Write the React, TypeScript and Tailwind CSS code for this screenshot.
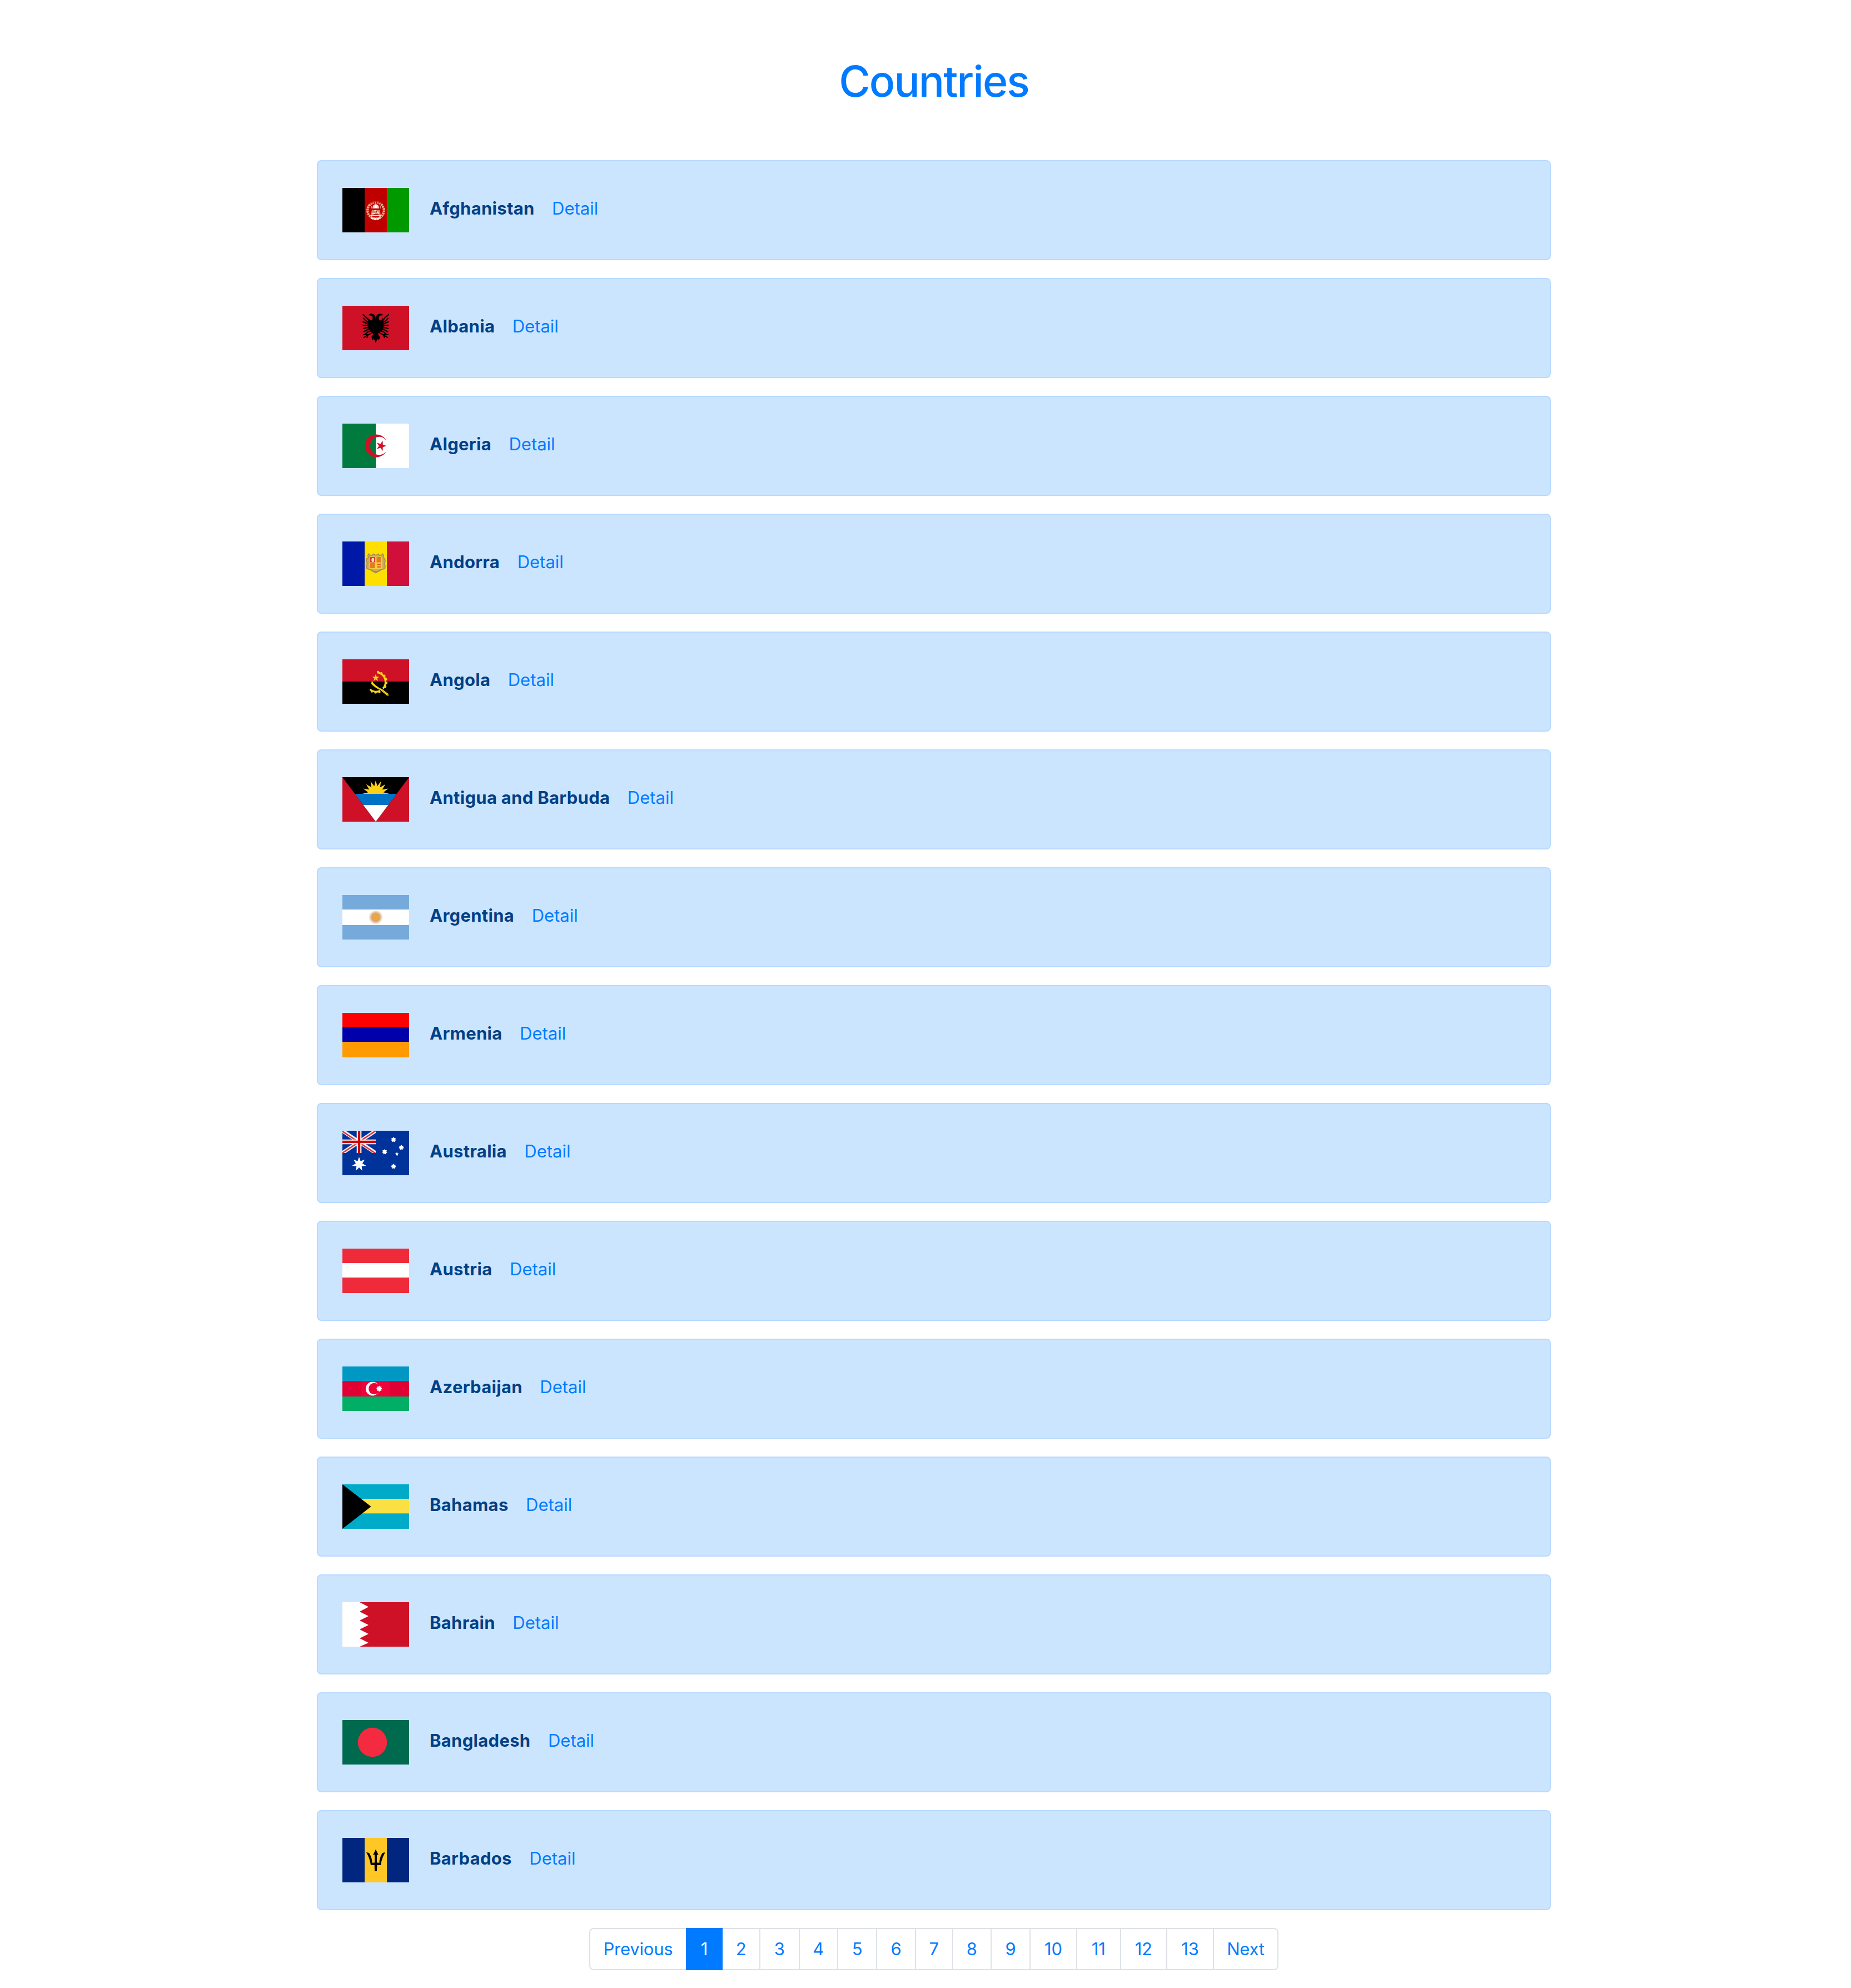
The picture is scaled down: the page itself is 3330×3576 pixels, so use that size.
import React from "react";

type Point = [number, number];

function starPoints(cx: number, cy: number, outer: number, inner: number, count: number, rotation = -90): string {
  const pts: Point[] = [];
  for (let i = 0; i < count * 2; i++) {
    const r = i % 2 === 0 ? outer : inner;
    const a = ((rotation + (i * 180) / count) * Math.PI) / 180;
    pts.push([cx + r * Math.cos(a), cy + r * Math.sin(a)]);
  }
  return pts.map(([x, y]) => `${x.toFixed(2)},${y.toFixed(2)}`).join(" ");
}

function Vertical({ colors }: { colors: [string, string, string] }) {
  return (
    <>
      {colors.map((c, i) => (
        <rect key={i} x={i * 40} width="40" height="80" fill={c} />
      ))}
    </>
  );
}

function Horizontal({ colors, a = 26, b = 54 }: { colors: [string, string, string]; a?: number; b?: number }) {
  return (
    <>
      <rect width="120" height={a} fill={colors[0]} />
      <rect y={a} width="120" height={b - a} fill={colors[1]} />
      <rect y={b} width="120" height={80 - b} fill={colors[2]} />
    </>
  );
}

const afghanistan = (
  <>
    <Vertical colors={["#000000", "#bf0000", "#009900"]} />
    <circle cx="60" cy="40.5" r="14.8" fill="none" stroke="#e3ae8c" strokeWidth="4.2" strokeDasharray="3.2 1" />
    <path d="M49 27q11-7 22 0" fill="none" stroke="#bf0000" strokeWidth="5" opacity=".6" />
    <path d="M54 37q0-7 6-8q6 1 6 8z" fill="#f3cfc4" />
    <circle cx="60" cy="33.5" r="2.6" fill="#fff" />
    <path d="M52 32v5M68 32v5M60 27v4" stroke="#e9b6a6" strokeWidth="1.4" />
    <path d="M53 40h14l2 9H51z" fill="#d98873" />
    <path d="M58 40l8 6M54 46h5M51 50h18" stroke="#f7ddd2" strokeWidth="2" />
    <path d="M61 41v3M56 48h9" stroke="#a31010" strokeWidth="1.6" />
    <path d="M52 54q8 4.500 16 0" fill="none" stroke="#fff" strokeWidth="3" strokeDasharray="4 1" />
  </>
);

const eagleHalf = (
  <g>
    <path
      d="M60.200 27L59.500 20Q58 14.500 52 14.300Q48.500 14 46.500 17L51 17.500Q54.500 18 54.500 22Q54.500 26 51.500 26.500Q48 25 47 21L46.500 40Q47 45 53.500 47.500L56 51L53 55L55.500 59L58 62L60.200 67z"
      fill="#000"
    />
    <path
      d="M48 28L44 22L36.500 15.500M48 31L42 27L37.500 22M48 34L42 31L36.500 28.500M48 37L42 35L36.500 35M48 40L43 39.500L37 41M49 43L44 43.500L38 47M51 45.500L46 47L40 52"
      fill="none"
      stroke="#000"
      strokeWidth="2.200"
    />
    <path d="M56 47L49 51L44 53.500M47 52L37 52M45 53L38 57.500M46 53L44 58M58 58L53.500 57L55 61" fill="none" stroke="#000" strokeWidth="2" />
  </g>
);

const albania = (
  <>
    <rect width="120" height="80" fill="#ce1126" />
    {eagleHalf}
    <g transform="translate(120 0) scale(-1 1)">{eagleHalf}</g>
  </>
);

const algeria = (
  <>
    <rect width="120" height="80" fill="#fff" />
    <rect width="60" height="80" fill="#007b3d" />
    <path d="M79.500 31A20.500 20.500 0 1 0 79.500 49A16.300 16.300 0 1 1 79.500 31z" fill="#ce1126" />
    <polygon points={starPoints(69.6, 40, 9.6, 3.8, 5, 0)} fill="#ce1126" />
  </>
);

const andorra = (
  <>
    <Vertical colors={["#0018a8", "#fedf00", "#d0103a"]} />
    <g transform="translate(3 1.500) scale(.95)">
      <path
        d="M55 22l3 2h4l3-2 2 3 4-1 2-2 2 3-1 4 3 2 1 5-2 4 2 5-1 5-4 1-5 1-3 3-5 3-5-3-3-3-5-1-4-1-1-5 2-5-2-4 1-5 3-2-1-4 2-3 2 2 4 1z"
        fill="#cfad50"
        stroke="#ab8c56"
        strokeWidth="1.800"
      />
      <rect x="48" y="27" width="24" height="24" rx="2" fill="#f0cf50" />
      <rect x="49" y="28" width="10" height="10" fill="#d8323f" />
      <ellipse cx="54.500" cy="33.500" rx="2.600" ry="4" fill="#ffe3a0" />
      <rect x="61.500" y="28" width="8.500" height="10" fill="#ea7a14" />
      <rect x="49.500" y="39.500" width="9" height="9.500" fill="#ea7a14" />
      <rect x="61.500" y="39.500" width="8.500" height="9.500" fill="#fbcf12" />
      <path d="M62.500 42h7M62.500 46.500h7" stroke="#dd5a22" strokeWidth="2.200" />
      <path d="M51 53q9 5 18 0" fill="none" stroke="#ab8c46" strokeWidth="2" />
    </g>
  </>
);

const angola = (
  <>
    <rect width="120" height="80" fill="#000" />
    <rect width="120" height="40" fill="#ce1126" />
    <path
      d="M62.500 23.500A17 17 0 0 1 77.500 39A17 17 0 0 1 73 52.500M68 56.500A17 17 0 0 1 49.500 54"
      fill="none"
      stroke="#f9d616"
      strokeWidth="3.400"
    />
    <path
      d="M62.500 22A19 19 0 0 1 79.500 39A19 19 0 0 1 74 54M68 58.500A19 19 0 0 1 49 56"
      fill="none"
      stroke="#f9d616"
      strokeWidth="3"
      strokeDasharray="3.400 3.600"
    />
    <path d="M53 38.500L51.800 44Q58 51 68.500 55.500L80 65L83 65.500L82.500 62L72 54Q58 48 53 38.500z" fill="#f9d616" />
    <path d="M70 55l12 9" stroke="#c9a30a" strokeWidth="1" />
    <polygon points={starPoints(60, 33.4, 6.8, 2.7, 5)} fill="#f9d616" />
  </>
);

const antigua = (
  <>
    <rect width="120" height="80" fill="#ce1126" />
    <polygon points="0,0 120,0 60,80" fill="#000" />
    <polygon points={starPoints(60, 30, 24.5, 14, 16)} fill="#fcd116" />
    <polygon points="22.500,30 97.500,30 82.500,50 37.500,50" fill="#0072c6" />
    <polygon points="37.500,50 82.500,50 60,80" fill="#fff" />
  </>
);

const argentina = (
  <>
    <defs>
      <radialGradient id="may-sun">
        <stop offset="0" stopColor="#e8a030" />
        <stop offset=".36" stopColor="#f3ad3c" />
        <stop offset=".44" stopColor="#d59a55" />
        <stop offset=".7" stopColor="#e6c39b" />
        <stop offset="1" stopColor="#fff" />
      </radialGradient>
    </defs>
    <Horizontal colors={["#75aadb", "#ffffff", "#75aadb"]} />
    <circle cx="60" cy="40" r="13" fill="url(#may-sun)" />
  </>
);

const armenia = <Horizontal colors={["#ff0000", "#0000aa", "#ff9a00"]} b={52.3} />;

const australia = (
  <>
    <rect width="120" height="80" fill="#003399" />
    <svg width="60" height="40" viewBox="0 0 60 40">
      <path d="M0 0L60 40M60 0L0 40" stroke="#f0f0f4" strokeWidth="6.600" />
      <path d="M0 1L60 41M60 0L0 40" stroke="#d8353d" strokeWidth="2.600" />
      <path d="M30 0V40M0 20H60" stroke="#fff" strokeWidth="8.600" />
      <path d="M30 0V40M0 20H60" stroke="#d00000" strokeWidth="4.400" />
    </svg>
    <polygon points={starPoints(30, 60, 13, 6, 7)} fill="#fff" />
    <polygon points={starPoints(92, 16, 5, 3.2, 7)} fill="#fff" />
    <polygon points={starPoints(106, 30, 5, 3.2, 7)} fill="#fff" />
    <polygon points={starPoints(76, 38, 5, 3.2, 7)} fill="#fff" />
    <polygon points={starPoints(98, 42, 3.4, 2, 5)} fill="#fff" />
    <polygon points={starPoints(92, 64, 5, 3.2, 7)} fill="#fff" />
  </>
);

const austria = <Horizontal colors={["#ef2b3b", "#ffffff", "#ef2b3b"]} b={52} />;

const azerbaijan = (
  <>
    <Horizontal colors={["#0098c3", "#e00034", "#00ae65"]} />
    <rect x="34" y="26" width="52" height="28" fill="#ee0438" />
    <circle cx="54.300" cy="40" r="12.400" fill="#fff" />
    <circle cx="57.300" cy="40" r="10.200" fill="#ee0438" />
    <polygon points={starPoints(66.3, 40, 5.6, 3.8, 8)} fill="#fff" />
  </>
);

const bahamas = (
  <>
    <Horizontal colors={["#00abc9", "#fae042", "#00abc9"]} b={52.3} />
    <polygon points="0,0 51.500,40 0,80" fill="#000" />
  </>
);

const bahrain = (
  <>
    <rect width="120" height="80" fill="#ce1126" />
    <path d="M0 0H31L47 8.500L31 17L47 25L31 33L47 41L31 49L47 57L31 65L47 73L31 80H0z" fill="#fff" />
  </>
);

const bangladesh = (
  <>
    <rect width="120" height="80" fill="#006a4e" />
    <circle cx="54" cy="40" r="26.200" fill="#f42a41" />
  </>
);

const tridentHalf = (
  <path d="M60.100 20.500L55 31L58 30V44.500L53.500 44.800Q54 37 48 27L43 26Q49.500 37 51 49L57.700 49L58 60H60.100z" />
);

const barbados = (
  <>
    <Vertical colors={["#00267f", "#ffc726", "#00267f"]} />
    <g fill="#000">
      {tridentHalf}
      <g transform="translate(120 0) scale(-1 1)">{tridentHalf}</g>
    </g>
  </>
);

type Country = { name: string; flag: React.ReactNode };

const countries: Country[] = [
  { name: "Afghanistan", flag: afghanistan },
  { name: "Albania", flag: albania },
  { name: "Algeria", flag: algeria },
  { name: "Andorra", flag: andorra },
  { name: "Angola", flag: angola },
  { name: "Antigua and Barbuda", flag: antigua },
  { name: "Argentina", flag: argentina },
  { name: "Armenia", flag: armenia },
  { name: "Australia", flag: australia },
  { name: "Austria", flag: austria },
  { name: "Azerbaijan", flag: azerbaijan },
  { name: "Bahamas", flag: bahamas },
  { name: "Bahrain", flag: bahrain },
  { name: "Bangladesh", flag: bangladesh },
  { name: "Barbados", flag: barbados },
];

const pages: { label: string; width: string }[] = [
  { label: "Previous", width: "w-[176px]" },
  { label: "1", width: "w-[66px]" },
  { label: "2", width: "w-[70px]" },
  { label: "3", width: "w-[72.5px]" },
  { label: "4", width: "w-[71.5px]" },
  { label: "5", width: "w-[72px]" },
  { label: "6", width: "w-[72px]" },
  { label: "7", width: "w-[68.5px]" },
  { label: "8", width: "w-[71.5px]" },
  { label: "9", width: "w-[72px]" },
  { label: "10", width: "w-[86px]" },
  { label: "11", width: "w-[80.5px]" },
  { label: "12", width: "w-[85.5px]" },
  { label: "13", width: "w-[86px]" },
  { label: "Next", width: "w-[118px]" },
];

function CountryCard({ name, flag }: Country) {
  return (
    <li className="flex h-[180px] items-center rounded-lg border-2 border-[#b8daff] bg-[#cce5ff] px-10">
      <svg className="size-32 shrink-0 blur-[0.6px]" viewBox="-4 -24 128 128" aria-hidden="true">
        <svg width="120" height="80" viewBox="0 0 120 80">
          {flag}
        </svg>
      </svg>
      <div className="ml-[33px] flex items-baseline gap-[31.5px] pb-1.5 text-[31px] leading-[48px] whitespace-nowrap">
        <span className="font-bold tracking-[0.3px] text-[#004085]">{name}</span>
        <a href="#" className="text-[#007bff]">
          Detail
        </a>
      </div>
    </li>
  );
}

export default function App() {
  return (
    <main className="flex min-h-[3576px] flex-col items-center bg-white pl-[30px] font-['Inter',sans-serif]">
      <h1 className="mt-[98px] h-24 text-[77px] leading-[96px] font-medium tracking-[-1.9px] text-[#007bff]">Countries</h1>
      <ul className="mt-[94px] flex w-[2220px] flex-col gap-8">
        {countries.map((c) => (
          <CountryCard key={c.name} name={c.name} flag={c.flag} />
        ))}
      </ul>
      <nav className="mt-8 flex text-[31px] tracking-[-0.2px]">
        {pages.map(({ label, width }, i) => (
          <a
            key={label}
            href="#"
            className={
              width +
              " -ml-0.5 flex h-[76px] items-center justify-center border-2 pt-px first:ml-0 first:rounded-l-lg last:rounded-r-lg " +
              (i === 1 ? "z-10 border-[#007bff] bg-[#007bff] text-white" : "border-[#dee2e6] bg-white text-[#007bff]")
            }
          >
            {label}
          </a>
        ))}
      </nav>
    </main>
  );
}
